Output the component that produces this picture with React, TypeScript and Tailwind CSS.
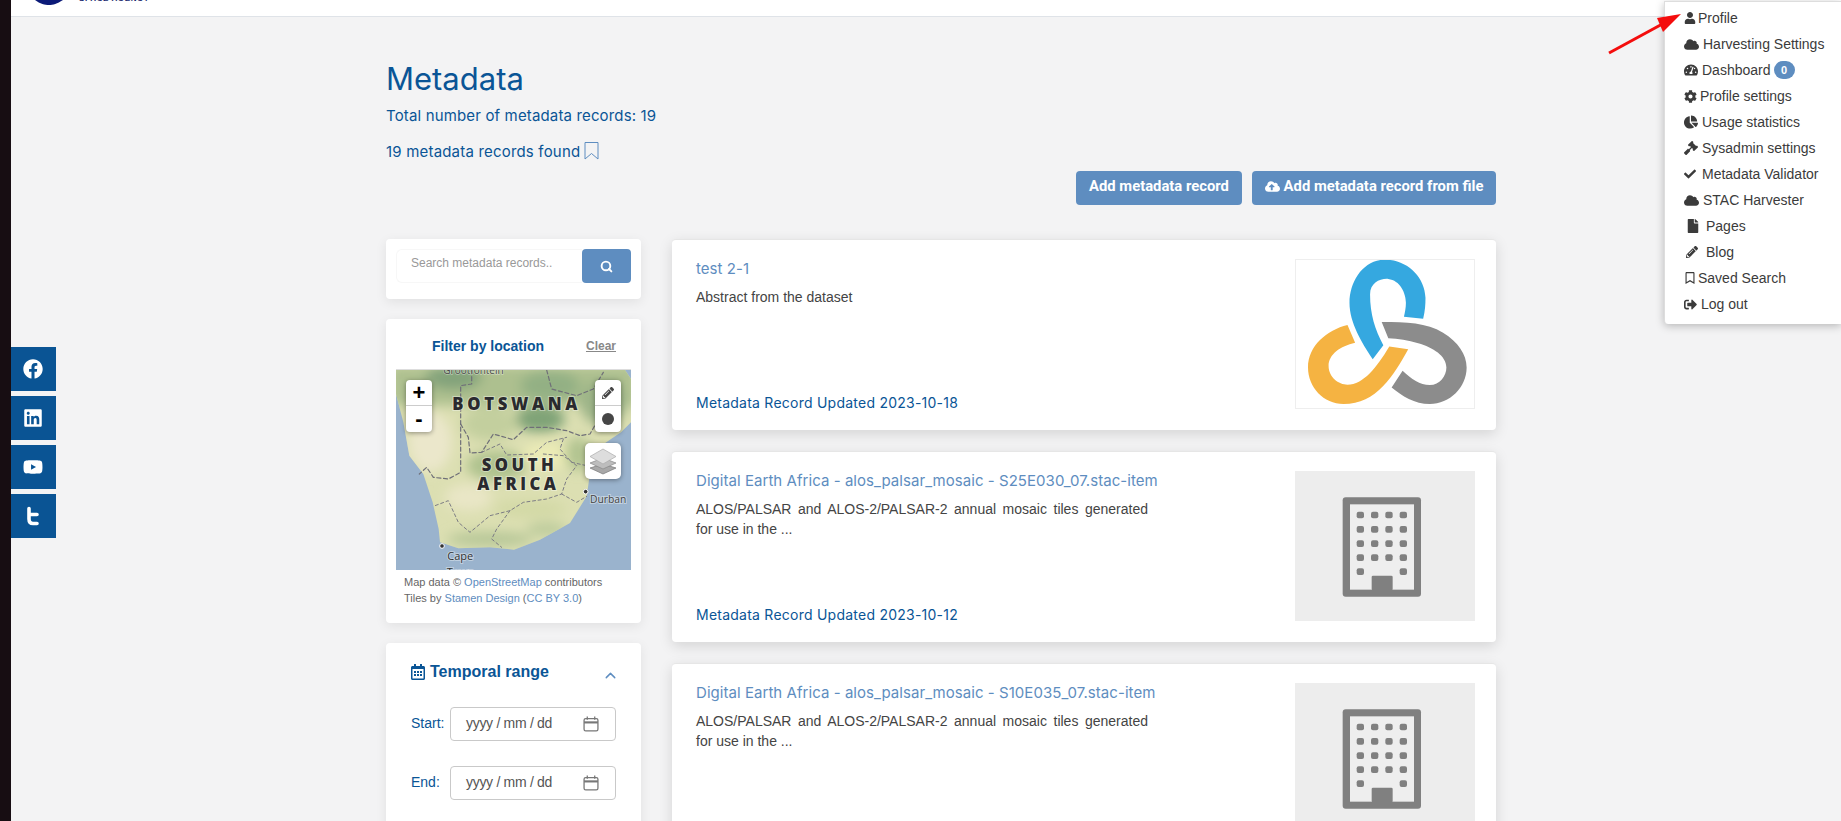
import { ChevronUp, Search } from 'lucide-react';
import { ReactNode } from 'react';
import {
  FaCheck,
  FaChartPie,
  FaCloud,
  FaCloudUploadAlt,
  FaCog,
  FaFacebook,
  FaFile,
  FaGavel,
  FaLinkedin,
  FaPencilAlt,
  FaRegBookmark,
  FaRegCalendarAlt,
  FaSignOutAlt,
  FaTachometerAlt,
  FaUser,
  FaYoutube,
} from 'react-icons/fa';

const menu = [
  { label: 'Profile', icon: <FaUser size={12} />, box: 'w-[14px]' },
  { label: 'Harvesting Settings', icon: <FaCloud size={15} />, box: 'w-[19px]' },
  { label: 'Dashboard', icon: <FaTachometerAlt size={14} />, box: 'w-[18px]', badge: true },
  { label: 'Profile settings', icon: <FaCog size={13} />, box: 'w-[16px]' },
  { label: 'Usage statistics', icon: <FaChartPie size={14} />, box: 'w-[18px]' },
  { label: 'Sysadmin settings', icon: <FaGavel size={14} />, box: 'w-[18px]' },
  { label: 'Metadata Validator', icon: <FaCheck size={12} />, box: 'w-[18px]' },
  { label: 'STAC Harvester', icon: <FaCloud size={15} />, box: 'w-[19px]' },
  { label: 'Pages', icon: <FaFile size={14} className="ml-[2px]" />, box: 'w-[22px]' },
  { label: 'Blog', icon: <FaPencilAlt size={12} className="ml-[2px]" />, box: 'w-[22px]' },
  { label: 'Saved Search', icon: <FaRegBookmark size={12} />, box: 'w-[14px]' },
  { label: 'Log out', icon: <FaSignOutAlt size={13} />, box: 'w-[17px]' },
];

function TwitterT() {
  return (
    <svg width="20" height="20" viewBox="0 0 20 20" fill="none" stroke="white" strokeWidth="3.6" strokeLinecap="round">
      <path d="M6 2.5v10.5c0 3 1.5 4.5 4 4.5h4M6 8.5h8" />
    </svg>
  );
}

function SocialBar() {
  const items = [<FaFacebook size={20} />, <FaLinkedin size={20} />, <FaYoutube size={20} />, <TwitterT />];
  return (
    <div className="absolute left-[11px] top-[347px] flex flex-col gap-[5px]">
      {items.map((icon, i) => (
        <div key={i} className="flex h-[44px] w-[45px] items-center justify-center bg-[#0a5494] pr-px text-white">
          {icon}
        </div>
      ))}
    </div>
  );
}

function UserMenu() {
  return (
    <div className="absolute right-0 top-px h-[323px] w-[177px] rounded-bl border-l border-t border-[#ddd] bg-white pl-[19px] pt-[3px] text-[14px] text-[#3b3b3b] shadow-[0_2px_8px_rgba(0,0,0,0.25)]">
      {menu.map((item) => (
        <div key={item.label} className="flex h-[26px] items-center">
          <span className={`${item.box} flex shrink-0 items-center`}>{item.icon}</span>
          <span>{item.label}</span>
          {item.badge && (
            <span className="ml-[3px] flex h-[18px] w-[21px] items-center justify-center rounded-full bg-[#5e8dc0] text-[11px] font-bold text-white">
              0
            </span>
          )}
        </div>
      ))}
    </div>
  );
}

function RedArrow() {
  return (
    <svg className="absolute left-[1600px] top-[8px]" width="90" height="52" viewBox="1600 8 90 52">
      <path d="M1609 53 L1666 22" stroke="#f40d0d" strokeWidth="3" />
      <polygon points="1681,14 1657,18 1663,32" fill="#f40d0d" />
    </svg>
  );
}

function KnotLogo() {
  return (
    <svg width="178" height="148" viewBox="107 61 536 446">
      <path
        fill="#35a8e0"
        d="M338 360 L370 318 C345 270 330 225 330 165 C330 130 360 116 385 118 C420 122 438 160 438 190 C438 205 435 220 432 232 L490 238 C496 215 497 195 497 175 C495 110 440 60 375 60 C310 60 268 125 268 190 C268 250 305 310 338 360 Z"
      />
      <path
        fill="#f5b342"
        d="M262 257 L285 310 C240 320 205 345 205 380 C205 415 235 437 262 437 C310 437 350 385 388 322 L445 330 C400 410 350 495 250 495 C190 495 143 445 143 385 C143 320 200 272 262 257 Z"
      />
      <path
        fill="#8c8c8c"
        d="M365 248 C440 248 500 250 550 280 C595 308 621 345 621 385 C621 445 570 495 510 495 C465 495 425 470 395 445 L428 395 C455 420 480 438 510 438 C540 438 560 410 560 385 C560 350 520 325 475 312 C445 303 415 298 385 297 Z"
      />
    </svg>
  );
}

function BuildingIcon() {
  const cols = [301, 344, 387, 430];
  const rows = [828, 871, 914, 956];
  return (
    <svg width="180" height="150" viewBox="105 696 540 450" className="block bg-[#ededed]">
      <rect x="248" y="775" width="235" height="298" rx="9" fill="#808080" />
      <rect x="270" y="796" width="192" height="256" fill="#eeeeee" />
      <rect x="335" y="1010" width="63" height="44" rx="4" fill="#808080" />
      {rows.map((y) =>
        cols.map((x) => <rect key={`${x}-${y}`} x={x - 11} y={y - 10} width="22" height="20" rx="6" fill="#808080" />),
      )}
      <rect x="290" y="988" width="22" height="20" rx="6" fill="#808080" />
      <rect x="419" y="988" width="22" height="20" rx="6" fill="#808080" />
    </svg>
  );
}

function RecordCard({
  title,
  abstract,
  updated,
  image,
}: {
  title: string;
  abstract: ReactNode;
  updated: string;
  image: ReactNode;
}) {
  return (
    <div className="flex h-[191px] shrink-0 justify-between rounded border-t border-[#e6e6e6] bg-white pb-[17px] pl-[24px] pr-[21px] pt-[19px] shadow-[0_4px_14px_rgba(0,0,0,0.13)]">
      <div className="flex w-[452px] flex-col">
        <div className="whitespace-nowrap font-['Inter',sans-serif] text-[15px] leading-[20px] tracking-[0.05px] text-[#5e8dc0]">{title}</div>
        <div className="mt-[8px] text-justify text-[14px] leading-[20px] text-[#444]">{abstract}</div>
        <div className="mt-auto font-['Inter',sans-serif] text-[14px] leading-[20px] tracking-[0.24px] text-[#0a5596]">{updated}</div>
      </div>
      <div className="h-[150px] w-[180px]">{image}</div>
    </div>
  );
}

function MapSketch() {
  const labelProps = {
    fontFamily: "'Open Sans', sans-serif",
    fill: '#2a2a2e',
    stroke: 'rgba(255,255,255,0.4)',
    strokeWidth: 6,
    paintOrder: 'stroke',
  } as const;
  const coast =
    'M18 13 L18 85 L40 170 L58 270 L100 325 L128 410 L146 490 L150 530 L205 548 L300 545 L372 552 L450 522 L540 472 L590 392 L602 310 L640 236 L693 200 L723 170 L723 40 L705 13 Z';
  return (
    <svg width="235" height="201" viewBox="18 13 705 603" className="block">
      <defs>
        <filter id="soft" x="-20%" y="-20%" width="140%" height="140%">
          <feGaussianBlur stdDeviation="17" />
        </filter>
        <clipPath id="land">
          <path d={coast} />
        </clipPath>
      </defs>
      <rect x="18" y="13" width="705" height="603" fill="#9ab3cd" />
      <path d={coast} fill="#dcdfb2" />
      <g clipPath="url(#land)">
        <g filter="url(#soft)">
          <rect x="0" y="0" width="740" height="120" fill="#adc08f" />
          <ellipse cx="190" cy="35" rx="85" ry="38" fill="#83a37a" />
          <ellipse cx="450" cy="160" rx="75" ry="40" fill="#7fa377" />
          <ellipse cx="480" cy="60" rx="90" ry="45" fill="#93b084" />
          <ellipse cx="640" cy="110" rx="70" ry="70" fill="#9bb387" />
          <ellipse cx="300" cy="175" rx="85" ry="50" fill="#c3cf9e" />
          <ellipse cx="120" cy="230" rx="65" ry="90" fill="#ebe7cb" />
          <ellipse cx="320" cy="300" rx="90" ry="45" fill="#afc28e" />
          <ellipse cx="470" cy="270" rx="75" ry="42" fill="#ebebb6" />
          <ellipse cx="235" cy="395" rx="70" ry="40" fill="#e9e6c6" />
          <ellipse cx="565" cy="265" rx="40" ry="50" fill="#b2c491" />
          <ellipse cx="420" cy="430" rx="110" ry="26" fill="#d3d9a6" />
          <ellipse cx="300" cy="520" rx="130" ry="22" fill="#b7c798" />
          <ellipse cx="470" cy="490" rx="60" ry="20" fill="#bccb9b" />
        </g>
      </g>
      <g fill="none" stroke="#6f6f78" strokeWidth="3.6" strokeDasharray="12 8" strokeLinecap="round" strokeLinejoin="round">
        <path d="M245 13 L245 55 L212 60 L212 320 L175 340 L130 335 L110 305 L88 325" />
        <path d="M470 13 L485 70 L560 90 L610 70 L640 20" />
        <path d="M212 175 L235 215 L240 262 L275 260 L310 205 L370 222 L410 185 L470 185 L530 195 L570 210 L600 205 L620 170 L620 140" />
      </g>
      <g fill="none" stroke="#7c7c84" strokeWidth="3" strokeDasharray="9 8" strokeLinecap="round" strokeLinejoin="round">
        <path d="M275 260 L330 235 L350 268 L430 265 L470 230 L530 215" />
        <path d="M460 265 L520 270 L560 300 L530 340 L515 385 L470 400 L400 410 L360 435 L300 450 L240 500 L205 470 L175 405 L135 420" />
        <path d="M515 385 L560 410 L590 392" />
        <path d="M360 435 L320 490 L305 520 L335 545" />
        <path d="M520 220 L510 250 L545 290 L590 300" />
      </g>
      <text x="160" y="25" fontSize="30" {...labelProps} strokeWidth={4} fill="#4a4a4a">
        Grootfontein
      </text>
      <text x="187" y="133" fontSize="50" fontWeight="800" letterSpacing="11" {...labelProps}>
        BOTSWANA
      </text>
      <text x="275" y="317" fontSize="50" fontWeight="800" letterSpacing="10.5" {...labelProps}>
        SOUTH
      </text>
      <text x="262" y="372" fontSize="50" fontWeight="800" letterSpacing="10.5" {...labelProps}>
        AFRICA
      </text>
      <text x="600" y="413" fontSize="31" {...labelProps} fill="#444">
        Durban
      </text>
      <text x="172" y="583" fontSize="33" {...labelProps} fill="#333">
        Cape
      </text>
      <text x="170" y="632" fontSize="33" {...labelProps} fill="#333">
        Town
      </text>
      <circle cx="587" cy="378" r="7" fill="#333" stroke="#fff" strokeWidth="3" />
      <circle cx="156" cy="541" r="7" fill="#333" stroke="#fff" strokeWidth="3" />
    </svg>
  );
}

function LayersIcon() {
  return (
    <svg width="28" height="28" viewBox="0 0 28 28">
      <path d="M14 17 L27 21 L14 27 L1 21 Z" fill="#a8a8a8" stroke="#777" strokeWidth="0.7" />
      <path d="M14 11 L27 16 L14 22 L1 16 Z" fill="#bdbdbd" stroke="#888" strokeWidth="0.7" />
      <path d="M14 2 L27 9.5 L14 17 L1 9.5 Z" fill="#dddddd" stroke="#aaa" strokeWidth="0.7" />
    </svg>
  );
}

function MapPanel() {
  return (
    <div className="relative h-[201px] overflow-hidden border-t border-[#ddd]">
      <MapSketch />
      <div className="absolute left-[10px] top-[10px] flex h-[52px] w-[26px] flex-col rounded bg-white text-black shadow-[0_1px_5px_rgba(0,0,0,0.4)]">
        <div className="flex h-[26px] items-center justify-center border-b border-[#ccc] text-[22px] font-bold leading-none">+</div>
        <div className="flex h-[26px] items-center justify-center text-[22px] font-bold leading-none">-</div>
      </div>
      <div className="absolute right-[10px] top-[10px] flex h-[52px] w-[26px] flex-col rounded bg-white text-[#464646] shadow-[0_1px_5px_rgba(0,0,0,0.4)]">
        <div className="flex h-[26px] items-center justify-center border-b border-[#ccc]">
          <FaPencilAlt size={12} />
        </div>
        <div className="flex h-[26px] items-center justify-center">
          <span className="h-[12px] w-[12px] rounded-full bg-[#464646]" />
        </div>
      </div>
      <div className="absolute right-[10px] top-[73px] flex h-[36px] w-[36px] items-center justify-center rounded-[5px] bg-white shadow-[0_1px_5px_rgba(0,0,0,0.4)]">
        <LayersIcon />
      </div>
    </div>
  );
}

function DateRow({ label, width }: { label: string; width: string }) {
  return (
    <div className="flex items-center">
      <span className={`${width} -mt-[2px] text-[14px] text-[#0a5596]`}>{label}</span>
      <div className="flex h-[34px] w-[166px] items-center justify-between rounded border border-[#c9c9c9] bg-white pl-[15px] pr-[16px] text-[14px] tracking-[-0.3px] text-[#555]">
        <span className="-mt-[2px]">yyyy / mm / dd</span>
        <svg width="16" height="16" viewBox="0 0 15 15" fill="none" stroke="#777" strokeWidth="1.2">
          <rect x="1" y="2.5" width="13" height="11.5" rx="1.5" />
          <path d="M1 6h13" strokeWidth="2" />
          <path d="M4 0.5v3M11 0.5v3" />
        </svg>
      </div>
    </div>
  );
}

function Sidebar() {
  return (
    <div className="flex w-[255px] shrink-0 flex-col gap-[20px]">
      <div className="h-[60px] rounded bg-white pl-[10px] pr-[10px] pt-[10px] shadow-[0_3px_12px_rgba(0,0,0,0.08)]">
        <div className="flex h-[34px]">
          <div className="flex-1 rounded-l-md border border-r-0 border-[#f7f7f7] pl-[14px] text-[12px] leading-[26px] text-[#999]">
            Search metadata records..
          </div>
          <div className="flex w-[49px] items-center justify-center rounded bg-[#5e8dc0] text-white">
            <Search size={13} strokeWidth={3.5} />
          </div>
        </div>
      </div>

      <div className="h-[304px] rounded bg-white px-[10px] shadow-[0_3px_12px_rgba(0,0,0,0.08)]">
        <div className="flex h-[50px] items-center pl-[36px] pr-[15px] pt-[4px]">
          <span className="text-[14px] font-bold text-[#0a5596]">Filter by location</span>
          <span className="ml-auto text-[12px] font-bold text-[#888] underline">Clear</span>
        </div>
        <MapPanel />
        <div className="pl-[8px] pt-[4px] text-[11px] leading-[16px] text-[#666]">
          <div>
            Map data © <span className="text-[#5e8dc0]">OpenStreetMap</span> contributors
          </div>
          <div>
            Tiles by <span className="text-[#5e8dc0]">Stamen Design</span> (<span className="text-[#5e8dc0]">CC BY 3.0</span>)
          </div>
        </div>
      </div>

      <div className="h-[240px] shrink-0 rounded bg-white pl-[24px] pr-[22px] pt-[17px] shadow-[0_3px_12px_rgba(0,0,0,0.08)]">
        <div className="flex items-center text-[#0a5596]">
          <FaRegCalendarAlt size={16} />
          <span className="ml-[4px] text-[16px] font-bold">Temporal range</span>
          <ChevronUp size={17} className="ml-auto mt-[6px] text-[#5e8dc0]" />
        </div>
        <div className="mt-[23px] flex flex-col gap-[25px] pl-px">
          <DateRow label="Start:" width="w-[39px]" />
          <DateRow label="End:" width="w-[39px]" />
        </div>
      </div>
    </div>
  );
}

const alosAbstract = (
  <>
    ALOS/PALSAR and ALOS-2/PALSAR-2 annual mosaic tiles generated for use in the ...
  </>
);

export default function App() {
  return (
    <div className="relative flex h-[821px] w-[1841px] overflow-hidden bg-[#f3f3f4] font-['Liberation_Sans',Arial,sans-serif]">
      <div className="w-[11px] shrink-0 bg-[#170d12]" />
      <div className="flex min-w-0 flex-1 flex-col">
        <header className="flex h-[17px] shrink-0 items-start overflow-hidden border-b border-[#dfe3e8] bg-white pl-[24px]">
          <svg width="28" height="5" viewBox="0 0 28 5">
            <path d="M0 0 H28 C22 4 18 5 14 5 C10 5 5 4 0 0 Z" fill="#0b1a78" />
          </svg>
          <span className="-mt-[6px] ml-[16px] text-[8px] font-bold leading-[10px] tracking-[0.6px] text-[#1a2a6e]">SPACE AGENCY</span>
        </header>

        <main className="ml-[375px] flex w-[1110px] flex-col">
          <h1 className="mt-[44px] font-['Inter',sans-serif] text-[31px] font-normal leading-[36px] text-[#0a5596]">Metadata</h1>
          <p className="mt-[9px] font-['Inter',sans-serif] text-[15px] leading-[20px] tracking-[0.15px] text-[#0a5596]">Total number of metadata records: 19</p>
          <p className="mt-[16px] flex items-center font-['Inter',sans-serif] text-[15px] leading-[20px] tracking-[0.19px] text-[#0a5596]">
            19 metadata records found
            <svg width="15" height="18" viewBox="0 0 15 18" fill="none" stroke="#5e8dc0" strokeWidth="1" className="-mt-[2px] ml-[4px]">
              <path d="M1 0.5H14V17L7.5 11.5L1 17Z" />
            </svg>
          </p>

          <div className="mt-[9px] flex justify-end gap-[10px] text-[14.8px]">
            <button className="flex h-[34px] w-[166px] items-center justify-center rounded bg-[#5e8dc0] pb-[3px] font-['Roboto',sans-serif] font-bold text-white">
              Add metadata record
            </button>
            <button className="flex h-[34px] w-[244px] items-center justify-center gap-[4px] rounded bg-[#5e8dc0] pb-[3px] font-['Roboto',sans-serif] font-bold text-white">
              <FaCloudUploadAlt size={15} />
              Add metadata record from file
            </button>
          </div>

          <div className="mt-[34px] flex gap-[31px]">
            <Sidebar />
            <div className="flex w-[824px] flex-col gap-[21px]">
              <RecordCard title="test 2-1" abstract="Abstract from the dataset" updated="Metadata Record Updated 2023-10-18" image={<div className="h-full w-full border border-[#eee]"><KnotLogo /></div>} />
              <RecordCard
                title="Digital Earth Africa - alos_palsar_mosaic - S25E030_07.stac-item"
                abstract={alosAbstract}
                updated="Metadata Record Updated 2023-10-12"
                image={<BuildingIcon />}
              />
              <RecordCard
                title="Digital Earth Africa - alos_palsar_mosaic - S10E035_07.stac-item"
                abstract={alosAbstract}
                updated="Metadata Record Updated 2023-10-12"
                image={<BuildingIcon />}
              />
            </div>
          </div>
        </main>
      </div>

      <SocialBar />
      <UserMenu />
      <RedArrow />
    </div>
  );
}
